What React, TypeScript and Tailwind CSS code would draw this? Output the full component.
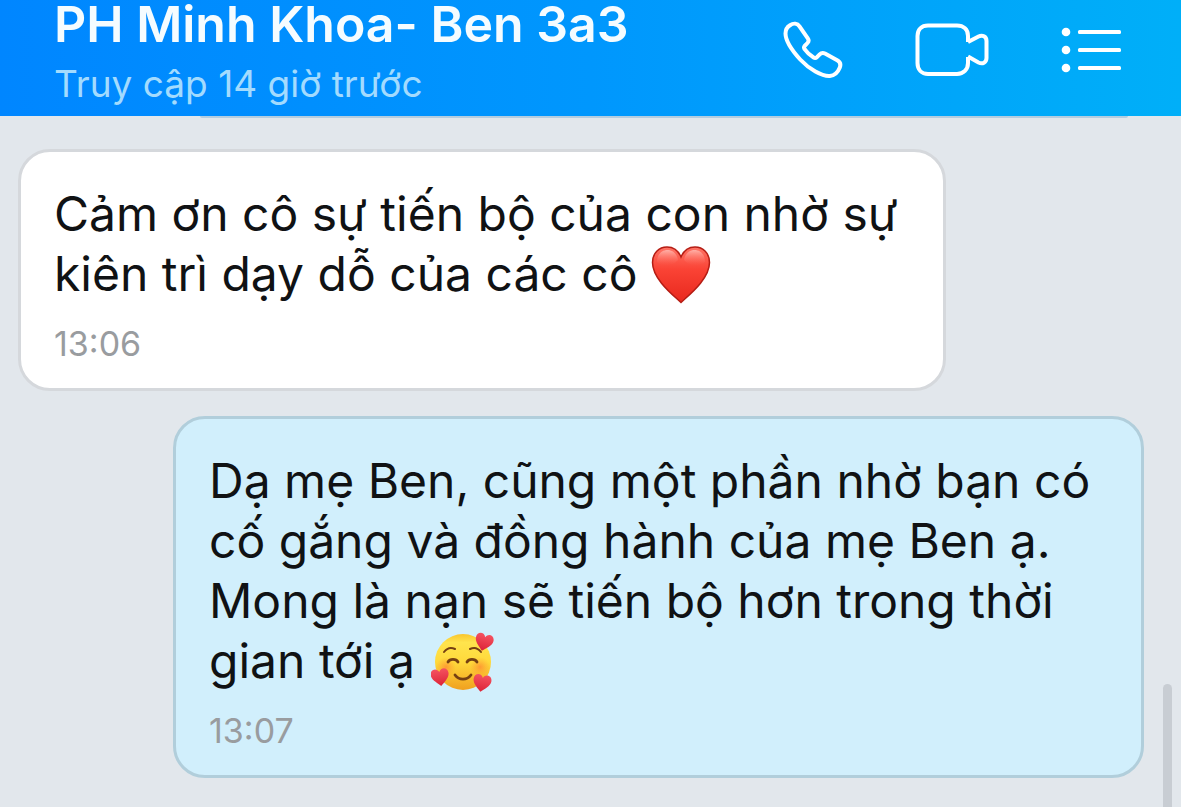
import React from "react";

const incoming = {
  lines: ["Cảm ơn cô sự tiến bộ của con nhờ sự", "kiên trì dạy dỗ của các cô"],
  time: "13:06",
};

const outgoing = {
  lines: [
    "Dạ mẹ Ben, cũng một phần nhờ bạn có",
    "cố gắng và đồng hành của mẹ Ben ạ.",
    "Mong là nạn sẽ tiến bộ hơn trong thời",
    "gian tới ạ",
  ],
  time: "13:07",
};

function PhoneIcon() {
  return (
    <svg width="60" height="58" viewBox="0 0 60 58" fill="none" stroke="white" strokeWidth="4" strokeLinejoin="round" strokeLinecap="round">
      <path d="M7 4.200C10.500 2 14.500 2.400 16.500 5.400L24.800 17.400C26 19.100 25.800 20.600 24.500 22L21.600 25C20.700 26 20.900 27 21.600 28.200C23.600 31 27 34.500 30.600 36.600C31.800 37.300 33 37 33.900 36.200L36.700 33.300C38 32 40 31.600 42 32.500L54.200 39.200C57.500 41 58 43.500 56.700 46.700C55 51 51.500 54.500 46.800 55C39 55.500 26 48 17.200 38.500C9.500 30 2.500 20 2.500 12.500C2.500 9 4 6 7 4.200Z" />
    </svg>
  );
}

function VideoIcon() {
  return (
    <svg width="74" height="54" viewBox="0 0 74 54" fill="none" stroke="white" strokeWidth="4" strokeLinejoin="round">
      <path d="M53 19V13C53 6.500 48.500 2.500 42 2.500H13C6.500 2.500 2.500 6.500 2.500 13V40C2.500 46.500 6.500 51 13 51H42C48.500 51 53 46.500 53 40V34" />
      <path d="M53 19L63.500 13.500C67.500 11.500 71.500 13.500 71.500 18V35C71.500 39.500 67.500 41.500 63.500 39.500L53 33.500" />
    </svg>
  );
}

function ListIcon() {
  return (
    <svg width="60" height="46" viewBox="0 0 60 46" fill="white">
      <circle cx="5" cy="5" r="4.300" />
      <circle cx="5" cy="23" r="4.300" />
      <circle cx="5" cy="41" r="4.300" />
      <rect x="17" y="3" width="43" height="4" rx="1.500" />
      <rect x="17" y="21" width="43" height="4" rx="1.500" />
      <rect x="17" y="39" width="43" height="4" rx="1.500" />
    </svg>
  );
}

function Heart() {
  return (
    <svg role="img" aria-label="❤️" className="ml-[14px] inline-block align-[-14px]" width="60" height="60" viewBox="0 0 60 60">
      <defs>
        <linearGradient id="heart" x1="0" y1="0" x2="0" y2="1">
          <stop offset="0" stopColor="#ff7466" />
          <stop offset="0.4" stopColor="#fa4335" />
          <stop offset="1" stopColor="#e8281d" />
        </linearGradient>
        <linearGradient id="heartShine" x1="0" y1="0" x2="0" y2="1">
          <stop offset="0" stopColor="#ffc0b8" stopOpacity="0.8" />
          <stop offset="1" stopColor="#ff6a5c" stopOpacity="0" />
        </linearGradient>
      </defs>
      <path d="M30 57.500C22 50 1.500 34 1.500 17.500C1.500 8 8 2 16 2C22.500 2 27.500 6 30 12C32.500 6 37.500 2 44 2C52 2 58.500 8 58.500 17.500C58.500 34 38 50 30 57.500Z" fill="url(#heart)" stroke="#b51d14" strokeWidth="1.500" />
      <path d="M6 17C6 9 11 5 16.500 5C22 5 26 9 27 15C22 21 12 22 6 17Z" fill="url(#heartShine)" />
      <path d="M54 17C54 9 49 5 43.500 5C38 5 34 9 33 15C38 21 48 22 54 17Z" fill="url(#heartShine)" />
    </svg>
  );
}

const smallHeart = "M0 9C-3 6 -9 2 -9 -3C-9 -9 -2 -10 0 -5C2 -10 9 -9 9 -3C9 2 3 6 0 9Z";

function LoveFace() {
  return (
    <svg role="img" aria-label="🥰" className="ml-4 inline-block align-[-14px]" width="64" height="60" viewBox="0 0 64 60">
      <defs>
        <linearGradient id="face" x1="0" y1="0" x2="0" y2="1">
          <stop offset="0" stopColor="#f9c52e" />
          <stop offset="0.15" stopColor="#ffe44d" />
          <stop offset="0.5" stopColor="#ffd93b" />
          <stop offset="1" stopColor="#f0a01f" />
        </linearGradient>
        <radialGradient id="blush">
          <stop offset="0" stopColor="#ff8432" stopOpacity="0.7" />
          <stop offset="1" stopColor="#ff9d2e" stopOpacity="0" />
        </radialGradient>
        <linearGradient id="smallHeart" x1="0" y1="0" x2="0" y2="1">
          <stop offset="0" stopColor="#f55260" />
          <stop offset="1" stopColor="#dc2337" />
        </linearGradient>
      </defs>
      <circle cx="32" cy="30" r="28" fill="url(#face)" />
      <circle cx="15" cy="35" r="10" fill="url(#blush)" />
      <circle cx="49" cy="35" r="10" fill="url(#blush)" />
      <g fill="none" stroke="#754012" strokeLinecap="round">
        <path d="M13 20C16 16 20 15 24 17" strokeWidth="2" />
        <path d="M39 17C43 15 47 16 50 20" strokeWidth="2" />
        <path d="M17 30C19 26.500 25 26.500 27 30" strokeWidth="2.800" />
        <path d="M36 30C38 26.500 44 26.500 46 30" strokeWidth="2.800" />
        <path d="M24 43C28 48.500 36 48.500 40 43" strokeWidth="2.800" />
      </g>
      <g fill="url(#smallHeart)">
        <path d={smallHeart} transform="translate(53 10) rotate(14)" />
        <path d={smallHeart} transform="translate(9 45) rotate(-8)" />
        <path d={smallHeart} transform="translate(51 51) rotate(10)" />
      </g>
    </svg>
  );
}

type BubbleProps = {
  message: { lines: string[]; time: string };
  emoji: React.ReactNode;
  className: string;
};

function Bubble({ message, emoji, className }: BubbleProps) {
  const last = message.lines.length - 1;
  return (
    <article className={`rounded-[32px] border-3 px-[33px] pt-8 pb-6 ${className}`}>
      <p className="whitespace-nowrap text-[48px] leading-[60px] text-[#101214]">
        {message.lines.map((line, i) => (
          <span key={line} className="block h-[60px]">
            {line}
            {i === last && emoji}
          </span>
        ))}
      </p>
      <time className="mt-5 block text-[34px] leading-[40px] text-[#999c9f]">{message.time}</time>
    </article>
  );
}

export default function App() {
  return (
    <div className="relative flex min-h-screen flex-col bg-[#e2e7ec] font-['Inter',sans-serif]">
      <header className="flex h-[116px] items-start justify-between bg-linear-to-r from-[#0086ff] via-[#0097fd] to-[#00aff8] pr-[60px] pl-[54px]">
        <div className="whitespace-nowrap">
          <h1 className="text-[50px] leading-[48px] font-semibold text-[#f5fcff]">PH Minh Khoa- Ben 3a3</h1>
          <p className="mt-3 text-[37px] leading-[48px] text-[#a3dbfe]">Truy cập 14 giờ trước</p>
        </div>
        <nav className="flex h-[100px] items-center gap-[72px]">
          <button type="button" aria-label="Gọi thoại"><PhoneIcon /></button>
          <button type="button" aria-label="Gọi video"><VideoIcon /></button>
          <button type="button" aria-label="Tùy chọn"><ListIcon /></button>
        </nav>
      </header>
      <main className="flex flex-1 flex-col pr-[37px] pl-[18px]">
        <div className="mr-4 ml-[182px] h-[2px] rounded-b-full bg-[#b4cde0]" />
        <Bubble message={incoming} emoji={<Heart />} className="mt-[31px] mr-[198px] border-[#d5d8dc] bg-white" />
        <Bubble message={outgoing} emoji={<LoveFace />} className="mt-[25px] ml-[155px] border-[#b1cedb] bg-[#d1effc]" />
      </main>
      <div className="absolute right-[9px] bottom-0 h-[123px] w-[9px] rounded-t-full bg-[#c8cdd3]" />
    </div>
  );
}
